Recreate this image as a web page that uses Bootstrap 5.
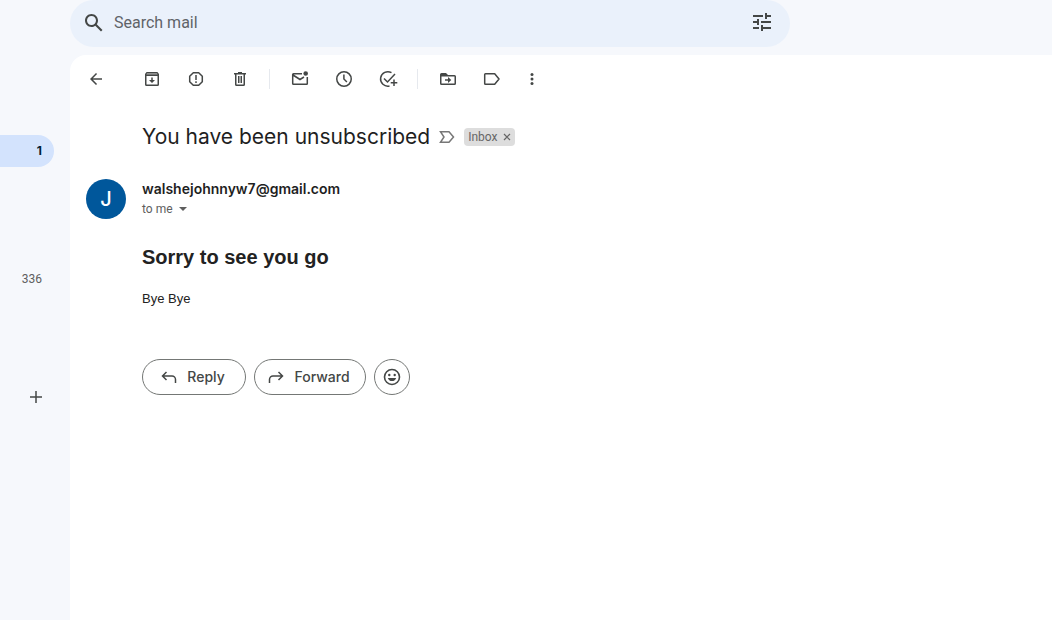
<!DOCTYPE html>
<html lang="en">
<head>
<meta charset="utf-8">
<meta name="viewport" content="width=device-width, initial-scale=1">
<title>You have been unsubscribed</title>
<link href="https://cdn.jsdelivr.net/npm/bootstrap@5.3.0/dist/css/bootstrap.min.css" rel="stylesheet">
<style>
  body { background: #f6f8fc; color: #1f1f1f; font-family: Roboto, "Liberation Sans", sans-serif; }
  svg { display: block; fill: currentColor; }
  button { color: #444746; }
  .plain { background: none; border: 0; padding: 0; }

  .side-rail { width: 70px; color: #5e5e5e; font-size: 12px; line-height: 16px; }
  .side-rail a { color: inherit; height: 32px; }
  .rail-inbox { width: 54px; margin-top: 135px; padding-right: 12px; background: #d3e3fd; border-radius: 0 16px 16px 0; font-family: Inter, sans-serif; }
  .side-rail .rail-inbox { color: #001d35; }
  .rail-drafts { width: 54px; margin-top: 96px; padding-right: 12px; }
  .rail-new { width: 20px; height: 20px; margin: 92px 0 0 26px; }

  .search-bar { max-width: 720px; height: 47px; padding: 0 16px 2px 12px; background: #eaf1fb; border-radius: 24px; }
  .search-bar input { background: none; border: 0; outline: 0; padding: 0; font-size: 16px; line-height: 24px; color: #1f1f1f; }
  .search-bar input::placeholder { color: #5f6368; opacity: 1; }

  .mail-panel { margin-top: 8px; background: #fff; border-radius: 16px 0 0 0; }
  .toolbar { height: 48px; padding-left: 4px; }
  .tool { width: 44px; height: 40px; }
  .tool-back { margin-right: 12px; }
  .tool-more { width: 36px; }
  .divider { width: 1px; height: 20px; margin: 0 8px 0 7px; background: #e6e9ee; }

  .indent { padding-left: 72px; }
  .subject-row { height: 28px; margin-top: 20px; gap: 6px; }
  .subject { font-family: Inter, sans-serif; font-size: 21px; line-height: 28px; font-weight: 400; }
  .inbox-chip { height: 18px; padding: 0 4px; gap: 5px; font-size: 12px; line-height: 18px; background: #ddd; color: #666; border-radius: 4px; }
  .inbox-chip button { color: #666; }

  .sender-row { margin-top: 28px; padding-left: 16px; gap: 16px; }
  .avatar { width: 40px; height: 40px; background: #00579b; color: #fff; font-family: Inter, sans-serif; font-size: 20px; font-weight: 500; }
  .sender { font-family: Inter, sans-serif; font-size: 14px; line-height: 20px; font-weight: 600; }
  .to-me { font-size: 12px; line-height: 20px; color: #5e5e5e; }

  .message { font-family: "Liberation Sans", Arial, sans-serif; color: #222; }
  .message h2 { margin: 26px 0 0; font-size: 20px; line-height: 24px; font-weight: 700; }
  .message p { margin: 22px 0 0; font-size: 13px; line-height: 16px; }

  .actions { margin-top: 52px; gap: 8px; }
  .pill { height: 36px; gap: 8px; padding: 0 10px 0 6px; background: #fff; border: 1px solid #747775; border-radius: 18px; font-family: Inter, sans-serif; font-size: 14px; line-height: 20px; font-weight: 500; }
  .pill-reply { width: 104px; }
  .pill-forward { width: 112px; }
  .pill-emoji { width: 36px; }
</style>
</head>
<body class="d-flex min-vh-100">
  <nav class="side-rail flex-shrink-0" aria-label="Mailboxes">
    <a href="#" class="rail-inbox d-flex align-items-center justify-content-end text-decoration-none fw-bold" aria-label="Inbox, 1 unread">1</a>
    <a href="#" class="rail-drafts d-flex align-items-center justify-content-end text-decoration-none" aria-label="Drafts, 336">336</a>
    <button type="button" class="rail-new plain" aria-label="Create new label"><svg width="20" height="20" viewBox="0 0 20 20"><path d="M9.250 4h1.500v5.250H16v1.500h-5.250V16h-1.500v-5.250H4v-1.500h5.250z"/></svg></button>
  </nav>

  <div class="d-flex flex-column flex-grow-1">
    <form class="search-bar d-flex align-items-center" role="search">
      <button type="button" class="plain" aria-label="Search"><svg width="24" height="24" viewBox="0 0 24 24"><path d="M20.49 19l-5.73-5.73C15.53 12.2 16 10.91 16 9.5 16 5.91 13.09 3 9.5 3S3 5.91 3 9.5 5.91 16 9.5 16c1.41 0 2.7-.47 3.77-1.24L19 20.49 20.49 19zM5 9.5C5 7.01 7.01 5 9.5 5S14 7.01 14 9.5 11.99 14 9.5 14 5 11.99 5 9.5z"/></svg></button>
      <input type="text" class="flex-grow-1 ms-2" placeholder="Search mail" aria-label="Search mail">
      <button type="button" class="plain" aria-label="Search options"><svg width="24" height="24" viewBox="0 0 24 24"><path d="M3 16v2h6v-2H3zM3 4v2h10V4H3zm10 16v-2h8v-2h-8v-2h-2v6h2zM7 8v2H3v2h4v2h2V8H7zm14 4v-2H11v2h10zm-6-4h2V6h4V4h-4V2h-2v6z"/></svg></button>
    </form>

    <main class="mail-panel flex-grow-1">
      <div class="toolbar d-flex align-items-center" role="toolbar" aria-label="Message actions">
        <button type="button" class="tool tool-back plain d-flex align-items-center justify-content-center" aria-label="Back"><svg width="20" height="20" viewBox="0 0 20 20"><path d="M16 9.25H6.900l4.150-4.150L10 4l-6 6 6 6 1.050-1.100-4.150-4.150H16z"/></svg></button>
        <button type="button" class="tool plain d-flex align-items-center justify-content-center" aria-label="Archive"><svg width="20" height="20" viewBox="0 0 20 20"><path fill-rule="evenodd" d="M4.600 3h10.800L17 5v10.500a1.500 1.500 0 0 1-1.500 1.500h-11A1.500 1.500 0 0 1 3 15.500V5zM4.500 7v8.500h11V7z"/><path fill="#aaa" d="M5 4.200h10l.6 1.300H4.400z"/><path d="M9.250 8.500h1.500v2.500h2.250l-3 3-3-3h2.250z"/></svg></button>
        <button type="button" class="tool plain d-flex align-items-center justify-content-center" aria-label="Report spam"><svg width="20" height="20" viewBox="0 0 20 20"><path fill="none" stroke="currentColor" stroke-width="1.500" d="M7.300 3.700h5.400l3.600 3.600v5.400l-3.600 3.600H7.300l-3.600-3.600V7.300z" stroke-linejoin="round"/><path d="M9.250 6h1.500v5h-1.500zM9.250 12.300h1.500v1.600h-1.500z"/></svg></button>
        <button type="button" class="tool plain d-flex align-items-center justify-content-center" aria-label="Delete"><svg width="20" height="20" viewBox="0 0 20 20"><path fill-rule="evenodd" d="M4 4h4V3h4v1h4v1.500h-1v10a1.500 1.500 0 0 1-1.500 1.500h-7A1.500 1.500 0 0 1 5 15.500v-10H4zm2.500 1.500v10h7v-10z"/><path d="M8 7h1.500v7H8zM10.500 7H12v7h-1.500z"/></svg></button>
        <span class="divider"></span>
        <button type="button" class="tool plain d-flex align-items-center justify-content-center" aria-label="Mark as unread"><svg width="20" height="20" viewBox="0 0 20 20"><path fill="none" stroke="currentColor" stroke-width="1.500" d="M12 4.750H3.500a.8.8 0 0 0-.8.8v9a.8.8 0 0 0 .8.8h13a.8.8 0 0 0 .8-.8V8M3 6l7 4.500 4-2.500"/><circle cx="15.700" cy="4.500" r="2.300"/></svg></button>
        <button type="button" class="tool plain d-flex align-items-center justify-content-center" aria-label="Snooze"><svg width="20" height="20" viewBox="0 0 20 20"><g fill="none" stroke="currentColor" stroke-width="1.500"><circle cx="10" cy="10" r="7.250"/><path d="M9.900 5.500V10l3 3"/></g></svg></button>
        <button type="button" class="tool plain d-flex align-items-center justify-content-center" aria-label="Add to tasks"><svg width="20" height="20" viewBox="0 0 20 20"><g fill="none" stroke="currentColor" stroke-width="1.500"><path d="M13.500 3.700A7.250 7.250 0 1 0 11.500 17M6 9.500l3.500 3.500 7.500-8M16 10.500v6.500M12.700 13.750h6.600"/></g></svg></button>
        <span class="divider"></span>
        <button type="button" class="tool plain d-flex align-items-center justify-content-center" aria-label="Move to"><svg width="20" height="20" viewBox="0 0 20 20"><path fill-rule="evenodd" d="M3.500 4H8l2 2h6.500A1.500 1.500 0 0 1 18 7.500v7a1.500 1.500 0 0 1-1.500 1.500h-13A1.500 1.500 0 0 1 2 14.500v-9A1.500 1.500 0 0 1 3.500 4zm0 3.500v7h13v-7z"/><path d="M7 10.250h3V8l3.300 3-3.300 3v-2.250H7z"/></svg></button>
        <button type="button" class="tool plain d-flex align-items-center justify-content-center" aria-label="Labels"><svg width="20" height="20" viewBox="0 0 20 20"><path fill="none" stroke="currentColor" stroke-width="1.500" stroke-linejoin="round" d="M3.500 4.750h9.200L17 10l-4.300 5.250H3.500a.8.8 0 0 1-.8-.8v-8.900a.8.8 0 0 1 .8-.8z"/></svg></button>
        <button type="button" class="tool tool-more plain d-flex align-items-center justify-content-center" aria-label="More"><svg width="20" height="20" viewBox="0 0 20 20"><circle cx="10" cy="5.500" r="1.500"/><circle cx="10" cy="10" r="1.500"/><circle cx="10" cy="14.500" r="1.500"/></svg></button>
      </div>

      <div class="subject-row indent d-flex align-items-center">
        <h1 class="subject mb-0">You have been unsubscribed</h1>
        <svg width="22" height="20" viewBox="0 0 22 20"><path fill="none" stroke="#777" stroke-width="1.500" d="M4.500 4.750h8.500L17.500 10 13 15.250H4.500L8 10z"/></svg>
        <span class="inbox-chip d-flex align-items-center">Inbox <button type="button" class="plain" aria-label="Remove label Inbox"><svg width="8" height="8" viewBox="0 0 8 8"><path fill="none" stroke="currentColor" stroke-width="1.200" d="M1 1l6 6M7 1L1 7"/></svg></button></span>
      </div>

      <div class="sender-row d-flex">
        <div class="avatar rounded-circle d-flex align-items-center justify-content-center">J</div>
        <div>
          <div class="sender">walshejohnnyw7@gmail.com</div>
          <button type="button" class="to-me plain d-flex align-items-center">to me <svg class="ms-1" width="12" height="12" viewBox="0 0 12 12"><path d="M2 4h8L6 8z"/></svg></button>
        </div>
      </div>

      <article class="message indent">
        <h2>Sorry to see you go</h2>
        <p>Bye Bye</p>
      </article>

      <div class="actions indent d-flex">
        <button type="button" class="pill pill-reply d-flex align-items-center justify-content-center"><svg class="flex-shrink-0" width="20" height="20" viewBox="0 0 20 20"><path fill="none" stroke="currentColor" stroke-width="1.500" d="M7.500 5L3.500 9l4 4M3.500 9H13a3.500 3.500 0 0 1 3.500 3.500V16"/></svg>Reply</button>
        <button type="button" class="pill pill-forward d-flex align-items-center justify-content-center"><svg class="flex-shrink-0" width="20" height="20" viewBox="0 0 20 20"><path fill="none" stroke="currentColor" stroke-width="1.500" d="M12.500 5l4 4-4 4M16.500 9H7a3.500 3.500 0 0 0-3.500 3.500V16"/></svg>Forward</button>
        <button type="button" class="pill pill-emoji d-flex align-items-center justify-content-center p-0" aria-label="Add reaction"><svg class="flex-shrink-0" width="20" height="20" viewBox="0 0 20 20"><circle cx="10" cy="10" r="7.500" fill="none" stroke="currentColor" stroke-width="1.600"/><circle cx="7.300" cy="8" r="1.200"/><circle cx="12.700" cy="8" r="1.200"/><path d="M5.800 11h8.400a4.400 4.400 0 0 1-8.400 0z"/></svg></button>
      </div>
    </main>
  </div>
<script src="https://cdn.jsdelivr.net/npm/bootstrap@5.3.0/dist/js/bootstrap.bundle.min.js"></script>
</body>
</html>
